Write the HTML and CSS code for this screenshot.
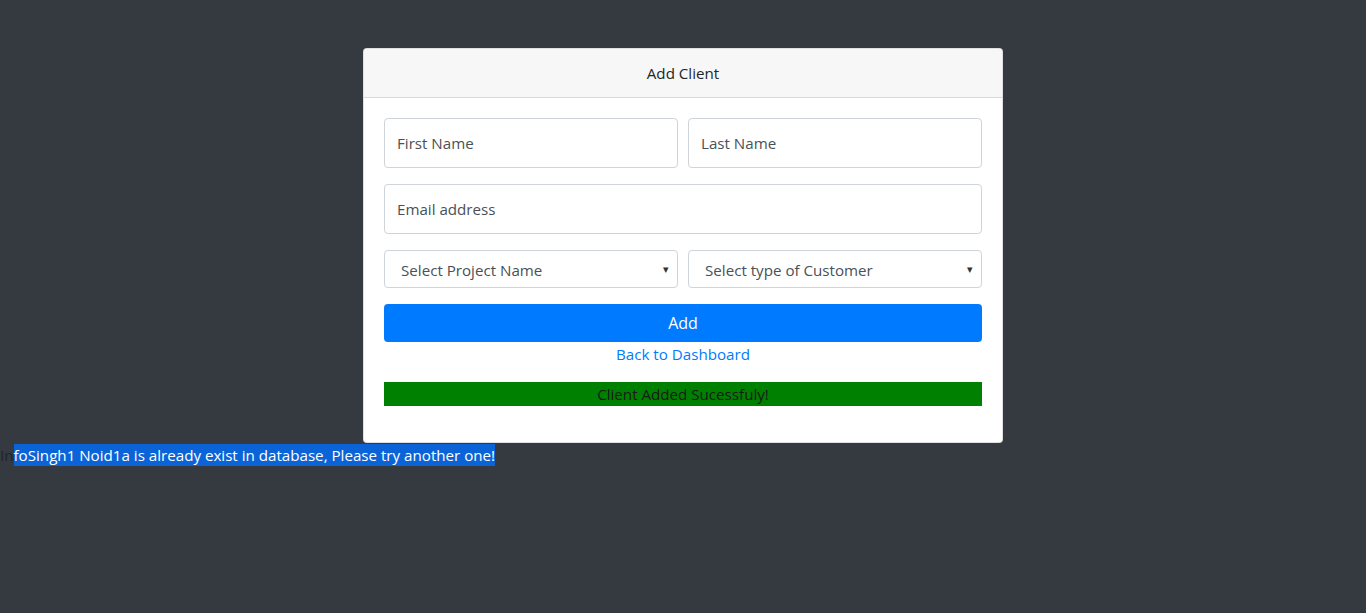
FILE: index.html
```html
<!DOCTYPE html>
<html>
<head>
<meta charset="utf-8">
<link rel="stylesheet" href="styles.css">
</head>
<body>
<div class="card">
  <div class="card-header">Add Client</div>
  <div class="card-body">
    <div class="row">
      <div class="field">First Name</div>
      <div class="field">Last Name</div>
    </div>
    <div class="row">
      <div class="field">Email address</div>
    </div>
    <div class="row">
      <div class="select">Select Project Name<span class="caret">▾</span></div>
      <div class="select">Select type of Customer<span class="caret">▾</span></div>
    </div>
    <div class="btn">Add</div>
    <div class="link-row"><a class="link">Back to Dashboard</a></div>
    <div class="alert">Client Added Sucessfuly!</div>
  </div>
</div>
<div class="msg">In<span class="sel">foSingh1 Noid1a is already exist in database, Please try another one!</span></div>
</body>
</html>
```
FILE: styles.css
```css
html, body {
  margin: 0;
  padding: 0;
  background: #343a40;
  font-family: "Open Sans", sans-serif;
  font-size: 15.15px;
  line-height: 24px;
  color: #212529;
}
.card {
  width: 638px;
  margin: 48px auto 0;
  background: #fff;
  border: 1px solid rgba(0,0,0,.125);
  border-radius: 4px;
}
.card-header {
  padding: 12px 20px;
  background: #f7f7f7;
  border-bottom: 1px solid rgba(0,0,0,.125);
  border-radius: 4px 4px 0 0;
  text-align: center;
}
.card-body {
  padding: 20px 20px 20px;
}
.row {
  display: flex;
  gap: 10px;
  margin-bottom: 16px;
}
.field {
  flex: 1;
  height: 50px;
  box-sizing: border-box;
  border: 1px solid #ced4da;
  border-radius: 4px;
  padding: 12px 12px;
  color: #495057;
  line-height: 24px;
}
.select {
  flex: 1;
  height: 38px;
  box-sizing: border-box;
  border: 1px solid #ced4da;
  border-radius: 4px;
  padding: 7px 12px 5px 16px;
  color: #495057;
  display: flex;
  justify-content: space-between;
  align-items: center;
}
.caret {
  font-size: 11px;
  color: #333;
  margin-right: -4px;
  margin-top: -2px;
}
.btn {
  height: 38px;
  box-sizing: border-box;
  background: #007bff;
  color: #fff;
  border-radius: 4px;
  text-align: center;
  padding: 7px 0;
  font-size: 16px;
}
.link-row {
  text-align: center;
  margin-bottom: 16px;
}
.link {
  color: #007bff;
}
.alert {
  background: #008000;
  color: #1a1a1a;
  text-align: center;
  height: 24px;
  margin-bottom: 16px;
}
.msg {
  color: #212529;
  white-space: nowrap;
}
.sel {
  background: #0a64d7;
  color: #fff;
  padding: 1px 0;
}
```
